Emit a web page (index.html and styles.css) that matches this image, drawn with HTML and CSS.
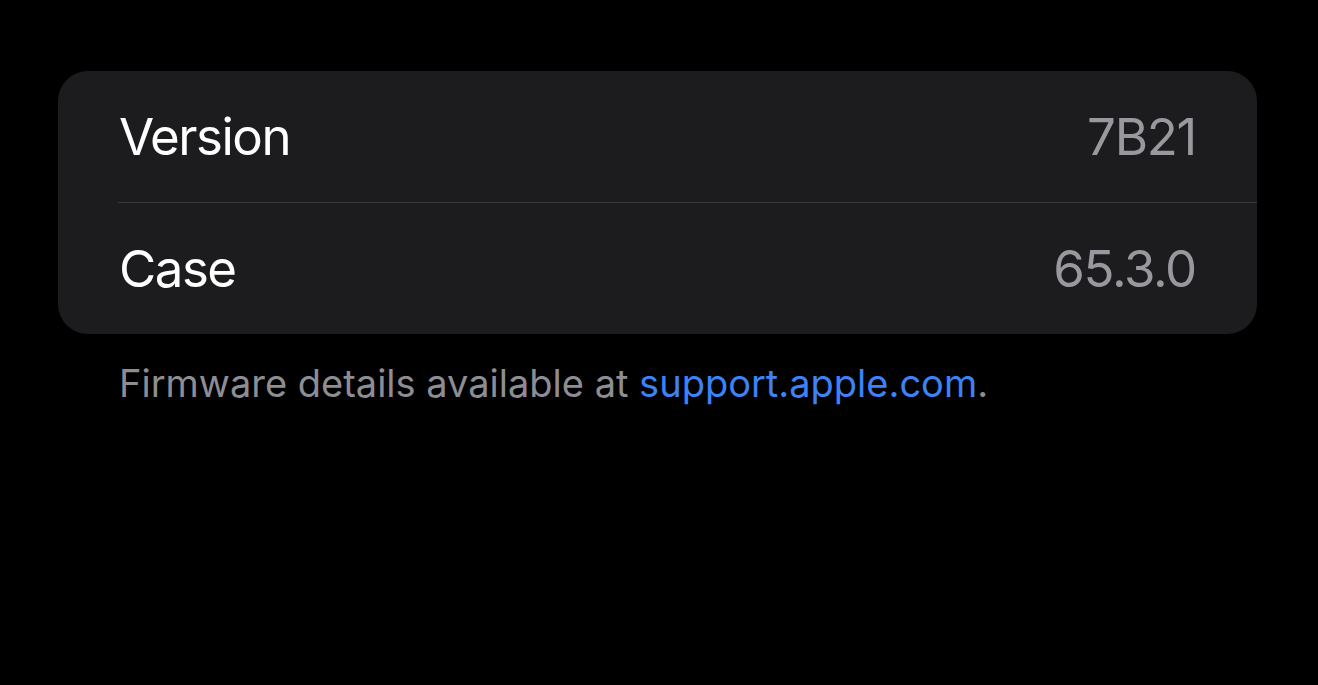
FILE: index.html
```html
<!DOCTYPE html>
<html lang="en">

<head>
    <meta charset="UTF-8">
    <meta name="viewport" content="width=device-width, initial-scale=1.0">
    <title>Firmware</title>
    <link rel="stylesheet" href="styles.css">
</head>

<body>
    <div class="container">
        <!-- Firmware info list -->
        <div class="card">
            <div class="row">
                <span class="label">Version</span>
                <span class="value">7B21</span>
            </div>
            <div class="row">
                <span class="label">Case</span>
                <span class="value">65.3.0</span>
            </div>
        </div>

        <p class="footer">Firmware details available at <a href="#">support.apple.com</a>.</p>
    </div>
</body>

</html>
```

FILE: styles.css
```css
body {
    margin: 0;
    background: #000;
    font-family: Inter, "Noto Sans", sans-serif;
}

.container {
    padding: 71px 61px 0 58px;
}

.card {
    background: #1c1c1e;
    border-radius: 30px;
}

.row {
    display: flex;
    align-items: center;
    justify-content: space-between;
    height: 131px;
    margin-left: 60px;
    padding: 0 61px 0 1px;
}

.row + .row {
    border-top: 1px solid #3a3a3c;
}

.label {
    color: #fff;
    font-size: 51px;
    letter-spacing: -1.5px;
}

.value {
    color: #98989f;
    font-size: 51px;
    letter-spacing: -1.3px;
}

.footer {
    margin: 26px 0 0 61px;
    color: #8d8d93;
    font-size: 38px;
}

.footer a {
    color: #3b83f6;
    text-decoration: none;
}
```
